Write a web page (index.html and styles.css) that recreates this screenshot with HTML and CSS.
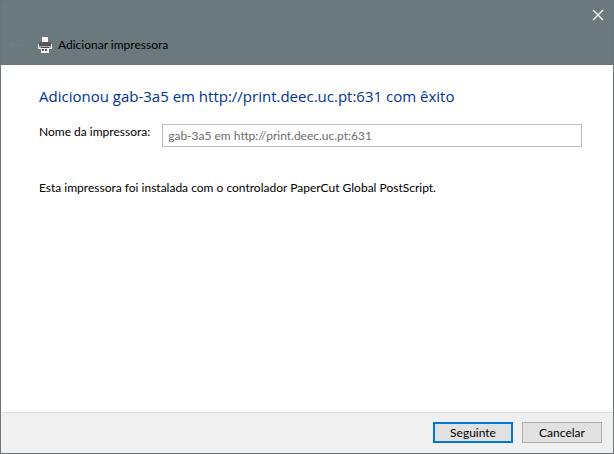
FILE: index.html
```html
<!DOCTYPE html>
<html lang="pt">
<head>
    <meta charset="UTF-8">
    <meta name="viewport" content="width=device-width, initial-scale=1.0">
    <title>Adicionar impressora</title>
    <link rel="stylesheet" href="styles.css">
</head>
<body>
    <form class="wizard">
        <header class="titlebar">
            <div class="window-controls">
                <button type="button" class="close" aria-label="Fechar">
                    <svg width="12" height="12" viewBox="0 0 12 12">
                        <path d="M1 1l10 10M11 1L1 11" stroke="#fff" stroke-width="1.3" fill="none"/>
                    </svg>
                </button>
            </div>
            <div class="caption">
                <button type="button" class="back" aria-label="Anterior" disabled>
                    <svg width="14" height="12" viewBox="0 0 14 12">
                        <path d="M13 6H2M6 2L2 6l4 4" stroke="#707d82" stroke-width="1.3" fill="none"/>
                    </svg>
                </button>
                <svg class="printer" width="16" height="16" viewBox="0 0 16 16">
                    <path d="M2 7h12v5H2z" fill="#a9abac"/>
                    <path d="M2 5h12v4H2z" fill="#5b5757"/>
                    <path d="M5 0h6v5H5z" fill="#fafafa"/>
                    <path d="M1 7h1v5H1zM14 7h1v5h-1zM1 11h14v1H1z" fill="#eceeee"/>
                    <path d="M4 10h8v6H4z" fill="#f4f4f4"/>
                    <path d="M4 10h8v1H4zM5 12h2v2H5zM8 12h2v2H8z" fill="#4c5154"/>
                </svg>
                <span>Adicionar impressora</span>
            </div>
        </header>
        <main class="content">
            <h1>Adicionou gab-3a5 em http://print.deec.uc.pt:631 com êxito</h1>
            <div class="field">
                <label for="printerName">Nome da impressora:</label>
                <input type="text" id="printerName" value="gab-3a5 em http://print.deec.uc.pt:631" readonly>
            </div>
            <p>Esta impressora foi instalada com o controlador PaperCut Global PostScript.</p>
        </main>
        <footer class="actions">
            <button type="submit" class="btn primary">Seguinte</button>
            <button type="button" class="btn">Cancelar</button>
        </footer>
    </form>
</body>
</html>
```
FILE: styles.css
```css
* {
    box-sizing: border-box;
}
body {
    margin: 0;
    font-family: Lato, "Open Sans", sans-serif;
    font-size: 12px;
    line-height: 16px;
    color: #000;
}
button, input {
    font: inherit;
}
.wizard {
    display: flex;
    flex-direction: column;
    min-height: 100vh;
    border: 1px solid #69757b;
    background: #fff;
}
.titlebar {
    height: 64px;
    background: #6b787d;
}
.window-controls {
    display: flex;
    justify-content: flex-end;
    height: 28px;
    padding-right: 3px;
}
.close, .back {
    display: flex;
    align-items: center;
    justify-content: center;
    padding: 0;
    border: none;
    background: none;
}
.close {
    width: 24px;
}
.back {
    width: 28px;
}
.caption {
    display: flex;
    align-items: center;
    height: 32px;
}
.printer {
    margin: 0 5px 0 8px;
}
.content {
    flex: 1;
    padding: 20px 31px 20px 38px;
}
h1 {
    margin: 0 0 17px;
    font-family: "Open Sans", "Noto Sans", sans-serif;
    font-size: 15px;
    font-weight: normal;
    line-height: 22px;
    color: #003399;
}
.field {
    display: flex;
    align-items: flex-start;
    gap: 12px;
    margin-bottom: 33px;
}
.field input {
    flex: 1;
    min-width: 0;
    height: 23px;
    padding: 0 5px;
    border: 1px solid #bfbfbf;
    background: #fff;
    color: #6d6d6d;
}
p {
    margin: 0;
}
.actions {
    display: flex;
    justify-content: flex-end;
    gap: 9px;
    padding: 9px 11px 10px;
    border-top: 1px solid #dfdfdf;
    background: #f0f0f0;
}
.btn {
    width: 80px;
    height: 21px;
    padding: 0;
    border: 1px solid #adadad;
    background: #e1e1e1;
    color: #000;
    line-height: 16px;
}
.primary {
    border: 2px solid #0078d7;
}
```
